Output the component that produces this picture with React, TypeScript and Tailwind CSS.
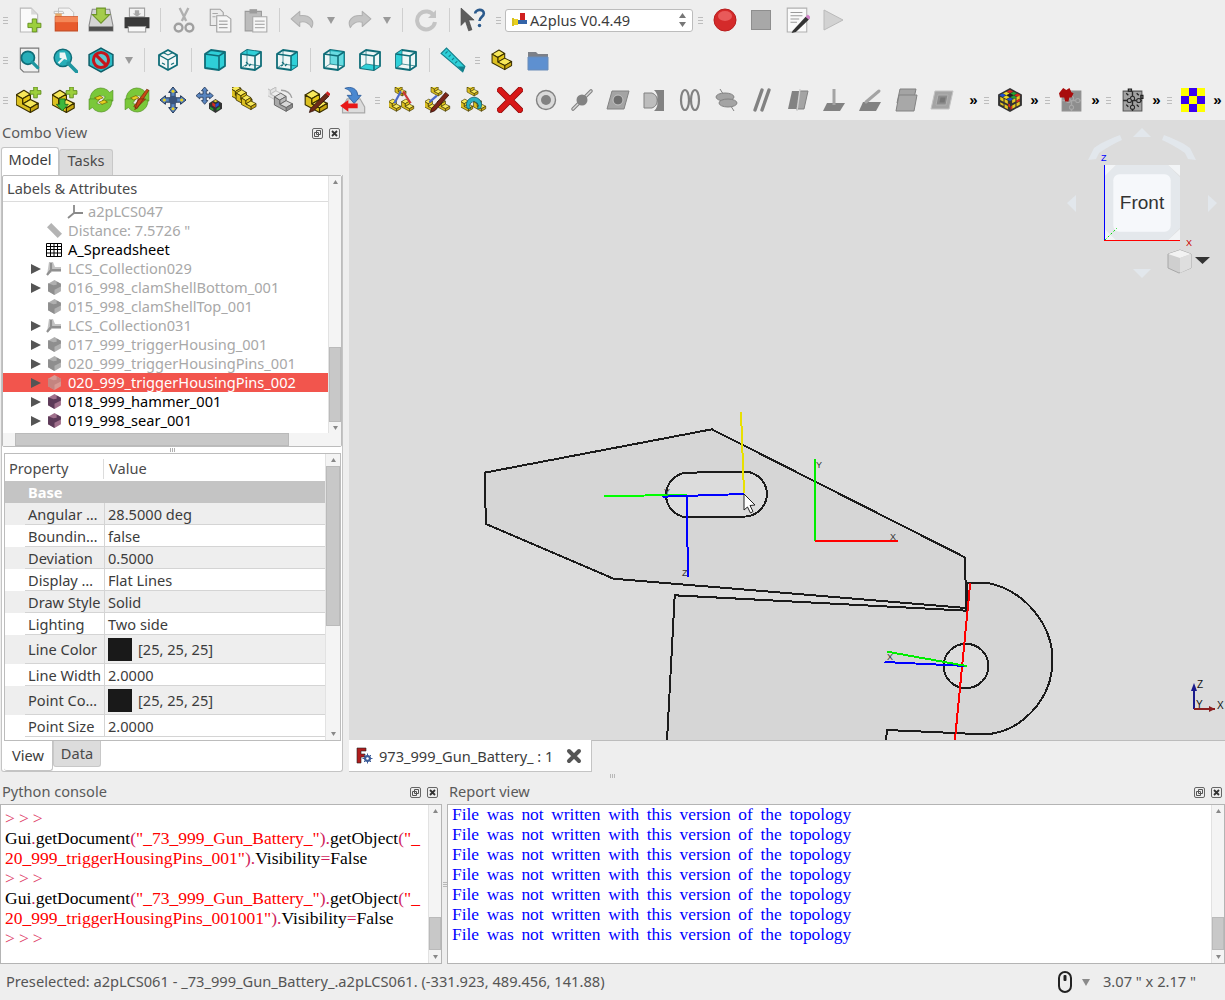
import type { ReactNode } from "react";

// --- toolbar furniture ---

function Grip({ w = "w-[11px]" }: { w?: string }) {
  return (
    <div className={`${w} h-full shrink-0 flex flex-col items-center justify-center gap-[2px]`}>
      <div className="w-[5px] h-px bg-[#bdbdbd]" />
      <div className="w-[5px] h-px bg-[#bdbdbd]" />
      <div className="w-[5px] h-px bg-[#bdbdbd]" />
    </div>
  );
}

function Sep() {
  return (
    <div className="w-[11px] h-full shrink-0 flex items-center justify-center">
      <div className="w-px h-[24px] bg-[#cfcfcf]" />
    </div>
  );
}

function Slot({ children }: { children: ReactNode }) {
  return <div className="w-9 h-full shrink-0 flex items-center justify-center">{children}</div>;
}

function DropArrow() {
  return (
    <div className="w-5 h-full shrink-0 flex items-center justify-center">
      <svg width="8" height="8" viewBox="0 0 8 8"><path d="M0 1h8L4 8z" fill="#9a9a9a" /></svg>
    </div>
  );
}

function More() {
  return (
    <div className="w-[13px] h-full shrink-0 flex items-center justify-center text-[15px] font-bold text-black font-['Liberation_Sans',sans-serif]">»</div>
  );
}

function Ic({ children, size = 24 }: { children: ReactNode; size?: number }) {
  return <svg width={size} height={size} viewBox="0 0 24 24" fill="none">{children}</svg>;
}

// --- icons ---

function Step({ t = "", c = ["#f7e85a", "#e6c818", "#c9a810", "#dcc020"], s = "#3a3000" }: { t?: string; c?: string[]; s?: string }) {
  return (
    <g transform={t}>
      <g transform="translate(-2.500 -4.500) scale(1.200)" stroke={s} strokeWidth="0.9" strokeLinejoin="round">
        <path d="M3 9L9 5.5 14 8.5 8 12Z" fill={c[0]} />
        <path d="M8 12L14 8.5V12.5L8 16Z" fill={c[1]} />
        <path d="M8 16L14 12.5 20 15.5 14 19Z" fill={c[0]} />
        <path d="M14 19L20 15.5V19L14 22.5Z" fill={c[2]} />
        <path d="M3 9L8 12V16L14 19V22.5L3 16.5Z" fill={c[3]} />
      </g>
    </g>
  );
}

const GreyStep = ["#d8d8d8", "#b8b8b8", "#8c8c8c", "#a8a8a8"];

function Plus({ x, y, s = 10 }: { x: number; y: number; s?: number }) {
  const a = s / 3;
  return (
    <path
      d={`M${x + a} ${y}h${a}v${a}h${a}v${a}h${-a}v${a}h${-a}v${-a}h${-a}v${-a}h${a}z`}
      fill="#9ccf3c"
      stroke="#5c8a18"
      strokeWidth="0.8"
    />
  );
}

function TealCube({ mode }: { mode: "front" | "top" | "right" | "rear" | "bottom" | "left" }) {
  const line = "#0f6d78";
  const fill = "#2fd0d8";
  const solid = mode === "front";
  return (
    <Ic>
      <path d="M2 6L8 2 22 4V18L16 22 2 20Z" fill={solid ? fill : "#eef6f6"} stroke={line} strokeWidth="1.8" strokeLinejoin="round" />
      {mode === "top" && <path d="M2 6L8 2 22 4 16 8Z" fill={fill} />}
      {mode === "right" && <path d="M16 8L22 4V18L16 22Z" fill={fill} />}
      {mode === "rear" && <path d="M8 2L22 4V18L8 16Z" fill={fill} opacity="0.7" />}
      {mode === "bottom" && <path d="M2 20L8 16 22 18 16 22Z" fill={fill} />}
      {mode === "left" && <path d="M2 6L8 2V16L2 20Z" fill={fill} />}
      <path d="M2 6L16 8 22 4M16 8V22" stroke={line} strokeWidth="1.6" />
      {!solid && <path d="M8 2V16L2 20M8 16L22 18" stroke={line} strokeWidth="1" opacity="0.7" />}
      {(mode === "top" || mode === "right") && <path d="M7 14l2 2M12 16l-2 2M6 18l2-1" stroke={line} strokeWidth="1.2" />}
    </Ic>
  );
}

function IsoCube() {
  const line = "#0f6d78";
  return (
    <Ic>
      <path d="M12 2L21 7V17L12 22 3 17V7Z" fill="#f2f6f6" stroke={line} strokeWidth="1.8" strokeLinejoin="round" />
      <path d="M3 7L12 12 21 7M12 12V22" stroke={line} strokeWidth="1.4" />
      <path d="M7 4.5L12 7 17 4.5M6 15l3 1.6M18 15l-3 1.6" stroke={line} strokeWidth="1.1" />
    </Ic>
  );
}

const Gry = "#a4a4a4";
const GryD = "#828282";

function Constraint({ kind }: { kind: number }) {
  return (
    <Ic>
      {kind === 0 && (
        <>
          <circle cx="12" cy="12" r="9.5" fill="#dadada" stroke={GryD} strokeWidth="1.4" />
          <circle cx="12" cy="12" r="5" fill={GryD} />
        </>
      )}
      {kind === 1 && (
        <>
          <path d="M3 21L21 3" stroke={GryD} strokeWidth="3.6" strokeLinecap="round" />
          <path d="M3 21L21 3" stroke="#dadada" strokeWidth="1.4" strokeLinecap="round" />
          <circle cx="12" cy="12" r="5.5" fill={GryD} />
        </>
      )}
      {kind === 2 && (
        <>
          <path d="M6 3H23L18 21H1Z" fill={Gry} stroke={GryD} />
          <circle cx="12" cy="12" r="5" fill="#6e6e6e" stroke="#c4c4c4" />
        </>
      )}
      {kind === 3 && (
        <>
          <path d="M2 5H10A8 8 0 0 1 10 20H2Z" fill="#bdbdbd" stroke={GryD} />
          <path d="M12 2H22V23H12A11 11 0 0 0 15 12 10 10 0 0 0 12 2Z" fill={GryD} />
        </>
      )}
      {kind === 4 && (
        <>
          <ellipse cx="7" cy="12" rx="4" ry="10" stroke={GryD} strokeWidth="2.2" fill="none" />
          <ellipse cx="17" cy="12" rx="4" ry="10" stroke={GryD} strokeWidth="2.2" fill="none" />
        </>
      )}
      {kind === 5 && (
        <>
          <path d="M6 1L20 23" stroke={GryD} />
          <ellipse cx="11" cy="9" rx="9" ry="4" fill={Gry} stroke={GryD} />
          <ellipse cx="14" cy="15" rx="9" ry="4" fill={Gry} stroke={GryD} />
        </>
      )}
      {kind === 6 && <path d="M5 22L12 2M12 22L19 2" stroke={GryD} strokeWidth="3.4" strokeLinecap="round" />}
      {kind === 7 && (
        <>
          <path d="M6 3H14L10 21H2Z" fill={GryD} />
          <path d="M14 3H22L18 21H10Z" fill={Gry} stroke={GryD} />
          <path d="M11 23L14 1" stroke="#d0d0d0" strokeWidth="1.4" />
        </>
      )}
      {kind === 8 && (
        <>
          <path d="M5 15H23L18 23H1Z" fill={GryD} />
          <path d="M12 1V17" stroke={Gry} strokeWidth="3" />
        </>
      )}
      {kind === 9 && (
        <>
          <path d="M5 14H23L18 23H1Z" fill={GryD} />
          <path d="M8 14L21 3" stroke={Gry} strokeWidth="3" strokeLinecap="round" />
        </>
      )}
      {kind === 10 && (
        <>
          <path d="M6 1H22L19 15H3Z" fill={Gry} stroke={GryD} />
          <path d="M5 7H23L20 23H2Z" fill="#a8a8a8" stroke={GryD} />
        </>
      )}
      {kind === 11 && (
        <>
          <path d="M5 3H23L19 21H1Z" fill={Gry} stroke="#c4c4c4" />
          <path d="M8 7H18L16 17H6Z" fill="#8c8c8c" stroke="#b0b0b0" />
          <path d="M10.500 9.500H15.500L14.500 14.500H9.500Z" fill="#777" />
        </>
      )}
    </Ic>
  );
}

function Rubik() {
  const cols = ["#d42a20", "#f0d820", "#2050d0", "#28a030", "#222", "#f0d820", "#d42a20", "#28a030", "#2050d0"];
  return (
    <Ic size={26}>
      <path d="M12 1L23 7V17L12 23 1 17V7Z" fill="#333" />
      {cols.map((c, i) => {
        const col = i % 3;
        const row = Math.floor(i / 3);
        return (
          <path key={i} d={`M${12 - col * 3.4 + row * 3.4} ${2.5 + col * 1.8 + row * 1.8}l3 1.6-3 1.6-3-1.6z`} fill={c} />
        );
      })}
      <path d="M3 9l3 1.6v3l-3-1.6zM7 11l3 1.6v3l-3-1.6zM3 14l3 1.6v2l-3-1.6zM14 20l3-1.6v-3l-3 1.6zM18 18l3-1.6v-3l-3 1.6zM18 12.5l3-1.6v-3l-3 1.6zM14 15l3-1.6v-3l-3 1.6zM7 16l3 1.6v3l-3-1.6z" fill="#e8c820" />
      <path d="M10.5 15l0 3 1.5 1v-3zM14 20l-1.5 1v-3l1.5-1zM18 12.5l3-1.6v2l-3 1.6z" fill="#d42a20" />
    </Ic>
  );
}

function Puzzle({ red }: { red?: boolean }) {
  const fill = red ? "#8e8e8e" : "#a2a2a2";
  const edge = red ? "#a8a8a8" : "#2a2a2a";
  return (
    <Ic size={25}>
      <path d="M3 3H21V22H3Z" fill={fill} stroke={red ? "#8e8e8e" : "#555"} />
      <path d="M12 3V8M12 12V17M12 20V22M3 12H7M11 12H16M20 12H21" stroke={edge} strokeWidth="1.300" />
      <circle cx="12" cy="10" r="2" fill={fill} stroke={edge} />
      <circle cx="9" cy="12" r="2" fill={fill} stroke={edge} />
      <circle cx="18" cy="12" r="2" fill={fill} stroke={edge} />
      <circle cx="12" cy="18.500" r="2" fill={fill} stroke={edge} />
      {red && <path d="M0 5L4 0 7 2 10 0 12 4 14 5 12 9 10 9 9 13H6L5 9 1 9Z" fill="#a80c0c" />}
      {!red && <path d="M8 1h3v2H8zM22 7v3h-2V7zM6 5l2 2M16 5l2 2M6 16l2 2M16 16l2 2" stroke="#222" strokeWidth="1.200" />}
    </Ic>
  );
}

function Checker() {
  const cells = ["#ffff00", "#3a00f0", "#ffff00", "#3a00f0", "#ffff00", "#3a00f0", "#ffff00", "#3a00f0", "#ffff00"];
  return (
    <div className="grid grid-cols-3 w-[24px] h-[24px]">
      {cells.map((c, i) => (
        <svg key={i} width="8" height="8"><rect width="8" height="8" fill={c} /></svg>
      ))}
    </div>
  );
}

function Row1() {
  return (
    <div className="h-10 flex items-center">
      <Grip />
      <Slot>
        <Ic size={26}>
          <path d="M4 1H14L20 7V23H4Z" fill="#fafafa" stroke="#b8b8b8" />
          <path d="M14 1V7H20Z" fill="#d8d8d8" />
          <Plus x={11} y={11} s={12} />
        </Ic>
      </Slot>
      <Slot>
        <Ic size={26}>
          <path d="M2 4H10L11 6H2ZM6 1H16L20 5V12H6Z" fill="#f4f4f4" stroke="#bbb" strokeWidth="0.8" />
          <path d="M3 6H9V9H3Z" fill="#e8a868" />
          <path d="M3 9H24V22H3Z" fill="#e85a2c" stroke="#c44a20" />
          <path d="M3 9H24V14H3Z" fill="#f48858" />
        </Ic>
      </Slot>
      <Slot>
        <Ic size={26}>
          <path d="M4 2H20L23 17V22H1V17Z" fill="#d4d4d4" stroke="#8c8c8c" />
          <path d="M1 18H23V22H1Z" fill="#4e4e4e" />
          <path d="M8 1H16V7H20L12 15 4 7H8Z" fill="#a4cc4c" stroke="#6c9428" />
        </Ic>
      </Slot>
      <Slot>
        <Ic size={26}>
          <path d="M5 1H19V9H5Z" fill="#f2f2f2" stroke="#a0a0a0" />
          <path d="M10 3h4v3h2l-4 3-4-3h2z" fill="#a8a8a8" />
          <path d="M1 10H23V19H1Z" fill="#3a3a3a" stroke="#333" />
          <path d="M4 18H20V23H4Z" fill="#f8f8f8" stroke="#9a9a9a" />
        </Ic>
      </Slot>
      <Sep />
      <Slot>
        <Ic size={26}>
          <path d="M8 1L14 13M16 1L10 13" stroke="#b0b0b0" strokeWidth="2.2" />
          <circle cx="7" cy="19" r="3.6" stroke="#a0a0a0" strokeWidth="2.2" />
          <circle cx="17" cy="19" r="3.6" stroke="#a0a0a0" strokeWidth="2.2" />
        </Ic>
      </Slot>
      <Slot>
        <Ic size={26}>
          <path d="M3 2H12L15 5V17H3Z" fill="#ebebeb" stroke="#a0a0a0" />
          <path d="M9 8H18L22 11V23H9Z" fill="#f6f6f6" stroke="#a0a0a0" />
          <path d="M11 13h8M11 16h8M11 19h8M5 6h5M5 9h3" stroke="#a8a8a8" />
        </Ic>
      </Slot>
      <Slot>
        <Ic size={26}>
          <path d="M2 4H17V22H2Z" fill="#bcbcbc" stroke="#9a9a9a" />
          <path d="M6 2H13V6H6Z" fill="#9c9c9c" />
          <path d="M9 9H22V23H9Z" fill="#f6f6f6" stroke="#a8a8a8" />
          <path d="M11 13h9M11 16h9M11 19h9" stroke="#b0b0b0" />
        </Ic>
      </Slot>
      <Sep />
      <Slot>
        <Ic size={26}>
          <path d="M9 4L1 11 9 18V14C13 13 17 14 20 19 23 13 19 7 9 8Z" fill="#c4c4c4" stroke="#b0b0b0" strokeLinejoin="round" />
        </Ic>
      </Slot>
      <DropArrow />
      <Slot>
        <Ic size={26}>
          <path d="M15 4L23 11 15 18V14C11 13 7 14 4 19 1 13 5 7 15 8Z" fill="#c4c4c4" stroke="#b0b0b0" strokeLinejoin="round" />
        </Ic>
      </Slot>
      <DropArrow />
      <Sep />
      <Slot>
        <Ic>
          <path d="M20 8A9 9 0 1 0 21 14" stroke="#c4c4c4" strokeWidth="4" />
          <path d="M22 2V10H14Z" fill="#c4c4c4" />
        </Ic>
      </Slot>
      <Sep />
      <Slot>
        <Ic size={26}>
          <path d="M1 1L13 12H8L11 21 8 22 5 13 1 17Z" fill="#5c5c5c" stroke="#444" strokeWidth="0.6" />
          <path d="M14 6C14 2 22 1 22 6 22 9 18 9 18 13" stroke="#2b5a8c" strokeWidth="2.4" />
          <circle cx="18" cy="17" r="1.6" fill="#2b5a8c" />
        </Ic>
      </Slot>
      <Grip w="w-[14px]" />
      <div className="w-[188px] h-[23px] shrink-0 bg-white border border-[#bcbcbc] rounded-[3px] flex items-center pl-[6px] pr-[6px]">
        <svg width="15" height="16" viewBox="0 0 15 16" fill="none" className="shrink-0">
          <path d="M0 6H2V14H0Z" fill="#d8c020" />
          <path d="M2 7H6V13H2Z" fill="#e8d020" />
          <path d="M6 8H15V12H6Z" fill="#3464a8" />
          <path d="M8 1H13V8H8Z" fill="#d02020" />
        </svg>
        <span className="ml-[3px] text-[14.6px] leading-none text-[#3c3c3c]">A2plus V0.4.49</span>
        <svg width="7" height="16" viewBox="0 0 7 16" className="ml-auto"><path d="M3.500 1L7 6H0ZM0 10H7L3.500 15Z" fill="#777" /></svg>
      </div>
      <Grip w="w-[14px]" />
      <Slot>
        <Ic>
          <circle cx="12" cy="12" r="11" fill="#d42a2a" stroke="#b81c1c" />
          <ellipse cx="12" cy="8" rx="7" ry="5" fill="#e85a5a" />
        </Ic>
      </Slot>
      <Slot>
        <svg width="20" height="20"><rect x="0.500" y="0.500" width="19" height="19" fill="#a8a8a8" stroke="#8e8e8e" /></svg>
      </Slot>
      <Slot>
        <Ic size={26}>
          <path d="M3 1H21V23H3Z" fill="#fafafa" stroke="#b0b0b0" />
          <path d="M6 5h11M6 8h11M6 11h8M6 14h6" stroke="#9a9a9a" />
          <path d="M8 22L20 9l3 2.500L11 23l-4 1z" fill="#333" />
          <path d="M20 9l2-2 3 2.500-2 2z" fill="#d080c8" />
        </Ic>
      </Slot>
      <Slot>
        <Ic>
          <path d="M3 2L22 12 3 22Z" fill="#d2d2d2" stroke="#bababa" />
        </Ic>
      </Slot>
    </div>
  );
}

function Row2() {
  return (
    <div className="h-10 flex items-center">
      <Grip />
      <Slot>
        <Ic size={26}>
          <path d="M4 1H21V23H7L4 20Z" fill="#f0f0f0" stroke="#777" />
          <circle cx="11" cy="10" r="6" fill="#27aeb8" stroke="#0f6d78" strokeWidth="1.6" />
          <path d="M15 14L20 19" stroke="#1f96a0" strokeWidth="3" strokeLinecap="round" />
        </Ic>
      </Slot>
      <Slot>
        <Ic size={26}>
          <circle cx="10" cy="10" r="8" fill="#27aeb8" stroke="#0f6d78" strokeWidth="1.4" />
          <path d="M15 15L23 23" stroke="#1f96a0" strokeWidth="3.4" strokeLinecap="round" />
          <path d="M12 5H7L14 12ZM7 5V10L14 12" fill="#eef6f6" />
          <path d="M6 15L12 9" stroke="#eef6f6" strokeWidth="2" />
        </Ic>
      </Slot>
      <Slot>
        <Ic size={26}>
          <path d="M12 1L23 7V17L12 23 1 17V7Z" fill="#29bcc6" stroke="#0f5d68" strokeWidth="1.4" />
          <circle cx="12" cy="12" r="7" stroke="#c4161c" strokeWidth="2.8" fill="#d8e8e8" fillOpacity="0.3" />
          <path d="M7 7L17 17" stroke="#c4161c" strokeWidth="2.8" />
        </Ic>
      </Slot>
      <DropArrow />
      <Sep />
      <Slot><IsoCube /></Slot>
      <Sep />
      <Slot><TealCube mode="front" /></Slot>
      <Slot><TealCube mode="top" /></Slot>
      <Slot><TealCube mode="right" /></Slot>
      <Sep />
      <Slot><TealCube mode="rear" /></Slot>
      <Slot><TealCube mode="bottom" /></Slot>
      <Slot><TealCube mode="left" /></Slot>
      <Sep />
      <Slot>
        <Ic size={26}>
          <path d="M1 6L6 1 23 18 21 23Z" fill="#2fd0d8" stroke="#15808c" />
          <path d="M23 18L21 23 16 18Z" fill="#15808c" />
          <path d="M5 6l2-2M8 9l2-2M11 12l2-2M14 15l2-2" stroke="#15808c" />
        </Ic>
      </Slot>
      <Grip w="w-[13px]" />
      <Slot><Ic size={23}><Step t="translate(0 -1)" /></Ic></Slot>
      <Slot>
        <Ic size={24}>
          <path d="M2 4H10L12 6H22V21H2Z" fill="#7c8088" />
          <path d="M2 9H22V22H2Z" fill="#5e90d0" stroke="#6a8cb8" />
        </Ic>
      </Slot>
    </div>
  );
}

function Row3() {
  return (
    <div className="h-10 flex items-center">
      <Grip />
      <Slot>
        <Ic size={26}>
          <Step t="translate(-1 1)" />
          <Plus x={13} y={0} s={10} />
        </Ic>
      </Slot>
      <Slot>
        <Ic size={26}>
          <Step t="translate(-1 1)" />
          <Plus x={13} y={0} s={10} />
          <path d="M7 11h5v5h3l-5.500 6L4 16h3z" fill="#3cb83c" stroke="#1c6c1c" strokeWidth="0.8" />
        </Ic>
      </Slot>
      <Slot>
        <Ic size={26}>
          <path d="M2 12A10 10 0 0 1 20 5L23 3V13H13L16 9A6 6 0 0 0 7 12Z" fill="#7ac83a" stroke="#4c8c1c" strokeWidth="0.6" />
          <path d="M22 12A10 10 0 0 1 4 19L1 21V11H11L8 15A6 6 0 0 0 17 12Z" fill="#7ac83a" stroke="#4c8c1c" strokeWidth="0.6" />
          <path d="M6 10l5-2 3 2-5 2zM10 14l5-2 3 2-5 2z" fill="#e8d020" stroke="#6c5c00" strokeWidth="0.6" />
        </Ic>
      </Slot>
      <Slot>
        <Ic size={26}>
          <path d="M2 12A10 10 0 0 1 20 5L23 3V13H13L16 9A6 6 0 0 0 7 12Z" fill="#7ac83a" stroke="#4c8c1c" strokeWidth="0.6" />
          <path d="M22 12A10 10 0 0 1 4 19L1 21V11H11L8 15A6 6 0 0 0 17 12Z" fill="#7ac83a" stroke="#4c8c1c" strokeWidth="0.6" />
          <path d="M6 10l5-2 3 2-5 2z" fill="#e8d020" stroke="#6c5c00" strokeWidth="0.6" />
          <path d="M9 18L21 2 23 3 12 20ZM13 11l7 0-10 10z" fill="#c84818" stroke="#702808" strokeWidth="0.6" />
        </Ic>
      </Slot>
      <Slot>
        <Ic size={26}>
          <path d="M12 0L16 5H14V10H19V8L24 12 19 16V14H14V19H16L12 24 8 19H10V14H5V16L0 12 5 8V10H10V5H8Z" fill="#5a86c0" stroke="#1c3050" strokeWidth="0.9" />
          <circle cx="12" cy="12" r="4" fill="#39547c" />
          <circle cx="12" cy="4" r="1.400" fill="#e8d020" />
          <circle cx="12" cy="20" r="1.400" fill="#e8d020" />
          <circle cx="4" cy="12" r="1.400" fill="#e8d020" />
          <circle cx="20" cy="12" r="1.400" fill="#e8d020" />
        </Ic>
      </Slot>
      <Slot>
        <Ic size={26}>
          <path d="M8 0L11 3.500H9.500V6.500H12.500V5L16 8 12.500 11V9.500H9.500V12.500H11L8 16 5 12.500H6.500V9.500H3.500V11L0 8 3.500 5V6.500H6.500V3.500H5Z" fill="#5a86c0" stroke="#1c3050" strokeWidth="0.7" />
          <path d="M18 11L24 15V20L18 24 12 20V15Z" fill="#333" />
          <path d="M15 14l3 2v3l-3-2z" fill="#d42a20" />
          <path d="M18 16l3-2v3l-3 2z" fill="#2050d0" />
          <path d="M13 18l3 2v2l-3-2zM19 20l3-2v2l-3 2z" fill="#28a030" />
          <path d="M18 12l2 1-2 1-2-1z" fill="#e8d020" />
        </Ic>
      </Slot>
      <Slot>
        <Ic size={26}>
          <g transform="translate(-2 -3) scale(.72)"><Step /></g>
          <g transform="translate(3 1) scale(.72)"><Step /></g>
          <g transform="translate(8 6) scale(.66)"><Step /></g>
        </Ic>
      </Slot>
      <Slot>
        <Ic size={26}>
          <g transform="translate(-3 -4) scale(.72)" opacity="0.6"><Step c={["#eee", "#ddd", "#ccc", "#ddd"]} s="#9a9a9a" /></g>
          <g transform="translate(5 4) scale(.82)"><Step c={GreyStep} s="#666" /></g>
          <path d="M12 3A10 8 0 0 1 22 10" stroke="#a0a0a0" strokeWidth="1.2" />
        </Ic>
      </Slot>
      <Slot>
        <Ic size={26}>
          <Step t="translate(0 1)" />
          <path d="M6 20L20 6l3 2.500L9 22l-4 1.500z" fill="#6c2a18" stroke="#2a0c04" strokeWidth="0.7" />
          <path d="M20 6l1.500-2 3 2.500-1.500 2z" fill="#d02020" />
        </Ic>
      </Slot>
      <Slot>
        <Ic size={28}>
          <path d="M3 18L7 11H18L22 18V23H3Z" fill="#dcdcdc" stroke="#a8a8a8" />
          <path d="M5 2C10 0 16 2 16 8H19L13 15 7 8H11C11 5 8 3 5 2Z" fill="#4a88d0" stroke="#2a5a98" strokeWidth="0.7" />
          <path d="M1 17L8 12V15H16V19H8V22Z" fill="#e81818" />
        </Ic>
      </Slot>
      <Grip w="w-[13px]" />
      <Slot>
        <Ic size={26}>
          <g transform="translate(5 -3) scale(.5)"><Step /></g>
          <g transform="translate(-1 10) scale(.55)"><Step /></g>
          <g transform="translate(11 10) scale(.55)"><Step /></g>
          <path d="M5 15L11 4" stroke="#4a68c8" strokeWidth="2" />
          <path d="M13 4L20 15" stroke="#c83838" strokeWidth="2" />
        </Ic>
      </Slot>
      <Slot>
        <Ic size={26}>
          <g transform="translate(5 -3) scale(.5)"><Step /></g>
          <g transform="translate(-1 10) scale(.55)"><Step /></g>
          <g transform="translate(11 10) scale(.55)"><Step /></g>
          <path d="M4 14L11 8" stroke="#4a68c8" strokeWidth="2" />
          <path d="M6 20L19 5l3 2.500L9 22l-4 1.500z" fill="#7c2418" stroke="#2a0c04" strokeWidth="0.7" />
        </Ic>
      </Slot>
      <Slot>
        <Ic size={26}>
          <g transform="translate(5 -3) scale(.5)"><Step /></g>
          <g transform="translate(-1 10) scale(.55)"><Step /></g>
          <g transform="translate(11 10) scale(.55)"><Step /></g>
          <path d="M6 20A7 7 0 1 1 18 20H15A4 4 0 1 0 9 20Z" fill="#28b0c0" stroke="#0f5d68" strokeWidth="0.7" />
        </Ic>
      </Slot>
      <Slot>
        <Ic size={26}>
          <path d="M3 3L21 21M21 3L3 21" stroke="#8c0c0c" strokeWidth="6" strokeLinecap="square" />
          <path d="M3 3L21 21M21 3L3 21" stroke="#d81818" strokeWidth="4.500" strokeLinecap="square" />
        </Ic>
      </Slot>
      {[0, 1, 2, 3, 4, 5, 6, 7, 8, 9, 10, 11].map((k) => (
        <Slot key={k}><Constraint kind={k} /></Slot>
      ))}
      <div className="w-[7px] shrink-0" />
      <More />
      <Grip w="w-[12px]" />
      <Slot><Rubik /></Slot>
      <More />
      <Grip w="w-[12px]" />
      <Slot><Puzzle red /></Slot>
      <More />
      <Grip w="w-[12px]" />
      <Slot><Puzzle /></Slot>
      <More />
      <Grip w="w-[12px]" />
      <Slot><Checker /></Slot>
      <More />
    </div>
  );
}

// --- dock bits ---

function DockButtons() {
  return (
    <div className="flex items-center gap-[6px]">
      <svg width="11" height="11" viewBox="0 0 11 11" fill="none">
        <rect x="0.500" y="0.500" width="10" height="10" rx="1.500" stroke="#666" />
        <path d="M4.500 2.500h4v4h-4zM2.500 4.500h4v4h-4z" stroke="#555" fill="#eee" />
      </svg>
      <svg width="11" height="11" viewBox="0 0 11 11" fill="none">
        <rect x="0.500" y="0.500" width="10" height="10" rx="1.500" stroke="#666" />
        <path d="M3 3L8 8M8 3L3 8" stroke="#333" strokeWidth="1.800" />
      </svg>
    </div>
  );
}

function VScroll({ thumb, w = "w-[13px]" }: { thumb: string; w?: string }) {
  return (
    <div className={`${w} shrink-0 flex flex-col bg-[#f4f4f4] border-l border-[#e2e2e2]`}>
      <div className="h-[12px] shrink-0 flex items-center justify-center">
        <svg width="5" height="4"><path d="M2.500 0L5 4H0Z" fill="#888" /></svg>
      </div>
      <div className={`${thumb} shrink-0 bg-[#c8c8c8] border border-[#bababa]`} />
      <div className="mt-auto h-[12px] shrink-0 flex items-center justify-center">
        <svg width="5" height="4"><path d="M0 0H5L2.500 4Z" fill="#888" /></svg>
      </div>
    </div>
  );
}

function Expander({ on }: { on?: boolean }) {
  return (
    <svg width="10" height="10" viewBox="0 0 10 10" className="shrink-0">
      {on && <path d="M0 0L10 5 0 10Z" fill="#555" />}
    </svg>
  );
}

function TreeBlock({ color }: { color: "grey" | "purple" | "sel" }) {
  const c = { grey: ["#b0b0b0", "#8e8e8e"], purple: ["#a0708c", "#5c3a58"], sel: ["#d89a94", "#c48480"] }[color];
  return (
    <svg width="15" height="15" viewBox="0 0 14 14">
      <path d="M7 0L13 3.500V10.500L7 14 1 10.500V3.500Z" fill={c[0]} />
      <path d="M6 5l-5-2V10.500L7 14V9L13 6V3.500L9 1.500V4.500Z" fill={c[1]} />
    </svg>
  );
}

function TreeLcs({ folder }: { folder?: boolean }) {
  return (
    <svg width="16" height="16" viewBox="0 0 16 14" fill="none">
      {folder && <path d="M3 0h4l2 5h6v5H6L1 13Z" fill="#c4c4c4" />}
      <path d="M5 1V8L1 13M5 8H15" stroke="#909090" strokeWidth="2.200" />
    </svg>
  );
}

type TreeRow = { label: string; exp?: boolean; icon: ReactNode; dark?: boolean; sel?: boolean };

const rows: TreeRow[] = [
  { label: "Distance: 7.5726 \"", icon: <svg width="15" height="15" viewBox="0 0 14 14"><path d="M0 4L4 0 14 10 10 14Z" fill="#b4b4b4" /></svg> },
  {
    label: "A_Spreadsheet",
    dark: true,
    icon: (
      <svg width="16" height="14" viewBox="0 0 16 14" fill="none">
        <path d="M.5.500h15v13H.5zM.5 3.500h15M.5 6.500h15M.5 10h15M4.500.500v13M8 .500v13M11.500.500v13" stroke="#000" />
      </svg>
    ),
  },
  { label: "LCS_Collection029", exp: true, icon: <TreeLcs folder /> },
  { label: "016_998_clamShellBottom_001", exp: true, icon: <TreeBlock color="grey" /> },
  { label: "015_998_clamShellTop_001", icon: <TreeBlock color="grey" /> },
  { label: "LCS_Collection031", exp: true, icon: <TreeLcs folder /> },
  { label: "017_999_triggerHousing_001", exp: true, icon: <TreeBlock color="grey" /> },
  { label: "020_999_triggerHousingPins_001", exp: true, icon: <TreeBlock color="grey" /> },
  { label: "020_999_triggerHousingPins_002", exp: true, sel: true, icon: <TreeBlock color="sel" /> },
  { label: "018_999_hammer_001", exp: true, dark: true, icon: <TreeBlock color="purple" /> },
  { label: "019_998_sear_001", exp: true, dark: true, icon: <TreeBlock color="purple" /> },
];

function Tree() {
  return (
    <div className="w-[340px] h-[272px] shrink-0 border border-[#bcbcbc] rounded-[2px] flex flex-col bg-white">
      <div className="h-[257px] flex">
        <div className="w-[325px] shrink-0 flex flex-col">
          <div className="h-[26px] shrink-0 pl-[4px] flex items-center border-b border-[#dcdcdc] text-[14.6px] text-[#4a4a4a]">Labels &amp; Attributes</div>
          <div className="h-[19px] shrink-0 pl-[63px] flex items-center text-[14.6px] text-[#a8a8a8]">
            <svg width="18" height="14" viewBox="0 0 18 14" fill="none" className="mr-[4px]">
              <path d="M8 0V8L2 13M8 8H17" stroke="#8a8a8a" strokeWidth="1.800" />
            </svg>
            a2pLCS047
          </div>
          {rows.map((r) => (
            <div
              key={r.label}
              className={`h-[19px] shrink-0 pl-[28px] flex items-center text-[14.6px] whitespace-nowrap ${r.sel ? "bg-[#f2554d] text-white" : r.dark ? "text-black" : "text-[#a8a8a8]"}`}
            >
              <Expander on={r.exp} />
              <div className="w-[16px] ml-[5px] shrink-0 flex items-center justify-center">{r.icon}</div>
              <span className="ml-[6px]">{r.label}</span>
            </div>
          ))}
        </div>
        <VScroll thumb="mt-[159px] h-[75px]" />
      </div>
      <div className="h-[13px] flex items-center bg-[#f4f4f4]">
        <div className="w-[12px] shrink-0" />
        <div className="w-[274px] h-full bg-[#c8c8c8] border border-[#bababa]" />
      </div>
    </div>
  );
}

type Prop = { name: string; value: string; swatch?: boolean };

const props: Prop[] = [
  { name: "Angular …", value: "28.5000 deg" },
  { name: "Boundin…", value: "false" },
  { name: "Deviation", value: "0.5000" },
  { name: "Display …", value: "Flat Lines" },
  { name: "Draw Style", value: "Solid" },
  { name: "Lighting", value: "Two side" },
  { name: "Line Color", value: "[25, 25, 25]", swatch: true },
  { name: "Line Width", value: "2.0000" },
  { name: "Point Co…", value: "[25, 25, 25]", swatch: true },
  { name: "Point Size", value: "2.0000" },
];

function PropertyTable() {
  return (
    <div className="ml-[2px] w-[337px] h-[288px] shrink-0 border border-[#bcbcbc] flex bg-white text-[14.6px] text-[#3c3c3c]">
      <div className="w-[320px] shrink-0 flex flex-col">
        <div className="h-[27px] shrink-0 pt-[2px] flex items-center text-[#4a4a4a]">
          <div className="w-[99px] pl-[4px] h-[20px] border-r border-[#dcdcdc] flex items-center">Property</div>
          <div className="pl-[5px]">Value</div>
        </div>
        <div className="h-[22px] shrink-0 pt-[2px] bg-[#c4c4c4] pl-[23px] flex items-center font-bold text-white">Base</div>
        {props.map((p, i) => (
          <div key={p.name} className={`${p.swatch ? "h-[29px]" : "h-[22px]"} shrink-0 flex ${i % 2 === 0 ? "bg-[#eeeeee]" : "bg-white"}`}>
            <div className="w-[20px] shrink-0" />
            <div className="w-[80px] shrink-0 pl-[3px] pt-[2px] border-b border-r border-[#d4d4d4] flex items-center whitespace-nowrap overflow-hidden">{p.name}</div>
            <div className="flex-1 pl-[3px] pt-[2px] border-b border-[#d4d4d4] flex items-center">
              {p.swatch && <div className="w-[24px] h-[23px] mr-[6px] -mt-[2px] bg-[#191919]" />}
              {p.value}
            </div>
          </div>
        ))}
      </div>
      <VScroll thumb="h-[160px]" w="w-[15px]" />
    </div>
  );
}

function Viewport() {
  return (
    <div className="h-[620px] bg-[#dcdcdc]">
      <svg className="block" width="876" height="620" viewBox="349 120 876 620" fill="none">
        {/* upper part */}
        <path d="M484.500 472.700L711.900 429.300 964.800 557.300 966.400 608 613.500 578.700 486 524Z" fill="#d6d6d6" stroke="#1c1c1c" strokeWidth="2" strokeLinejoin="round" shapeRendering="crispEdges" />
        <path d="M686 472.700L746 471.700A23 22.500 0 0 1 746 516.500L686 517.300A23 22.500 0 0 1 686 472.700Z" fill="#dcdcdc" stroke="#1c1c1c" strokeWidth="2" shapeRendering="crispEdges" />
        {/* lower part */}
        <path d="M667 741L674.700 595.300 966.400 610.700 967.500 582.700H986.600C1025 590 1052.500 625 1052.500 660 1052.500 700 1020 734 982.800 734.300L887 730 886 741Z" fill="#d6d6d6" />
        <path d="M667 741L674.700 595.300 966.400 610.700 967.500 582.700H986.600C1025 590 1052.500 625 1052.500 660 1052.500 700 1020 734 982.800 734.300L887 730 886 741" stroke="#1c1c1c" strokeWidth="2" shapeRendering="crispEdges" />
        <path d="M966.400 608L966.400 611" stroke="#1c1c1c" strokeWidth="2" />
        <ellipse cx="966" cy="666" rx="22.400" ry="22.200" fill="#dcdcdc" stroke="#1c1c1c" strokeWidth="2" shapeRendering="crispEdges" />
        {/* axes */}
        <g shapeRendering="crispEdges" strokeWidth="2">
          <path d="M741 412L744 493" stroke="#e8e000" />
          <path d="M604 496L687 495" stroke="#00ff00" />
          <path d="M662.500 496.700L744 494M687 495L687.800 576.700" stroke="#0000ff" />
          <path d="M814.800 459.300V540.700" stroke="#00ee00" />
          <path d="M814.800 540.700H897.900" stroke="#ff0000" />
          <path d="M970.200 583.300L954.900 740" stroke="#ff0000" />
          <path d="M884.500 662L966.700 666" stroke="#0000ff" />
          <path d="M887.100 651.700L966.700 666" stroke="#00ee00" />
        </g>
        <g className="font-['Liberation_Sans',sans-serif]" fontSize="9" fill="#333">
          <text x="816" y="468">Y</text>
          <text x="890" y="540">X</text>
          <text x="682" y="576">Z</text>
          <text x="887" y="660">X</text>
          <text x="664" y="495">Y</text>
        </g>
        {/* cursor */}
        <path d="M744 494V510L747.500 507 750.500 513 753 511.500 750 505.500 755 505Z" fill="#fff" stroke="#222" strokeWidth="1" />
        {/* navigation cube */}
        <path d="M1116 165H1168L1180 177V228L1168 240H1116L1104 228V177Z" fill="#e4e8ec" />
        <rect x="1113.300" y="174.300" width="57.400" height="57.400" rx="6" fill="#f6f8fb" />
        <path d="M1105 176L1116 165 1105 165ZM1180 176L1168 165H1180ZM1105 229L1116 240H1105ZM1180 229L1168 240H1180Z" fill="#f2f4f6" />
        <text x="1142" y="209" textAnchor="middle" fontSize="19" fill="#333" className="font-['Liberation_Sans',sans-serif]">Front</text>
        <path d="M1104.500 165V240" stroke="#0000ff" />
        <path d="M1104 240.500H1180" stroke="#ff0000" />
        <path d="M1105 240L1117 228" stroke="#00dd00" strokeDasharray="2 2" />
        <g className="font-['Liberation_Sans',sans-serif]" fontSize="9">
          <text x="1101" y="161" fill="#0000ff">Z</text>
          <text x="1186" y="246" fill="#cc0000">X</text>
        </g>
        <g fill="#e2e7ec">
          <path d="M1142 128L1151 137H1133Z" />
          <path d="M1067 203L1076 195V212Z" />
          <path d="M1217 203L1208 195V212Z" />
          <path d="M1142 278L1133 269H1151Z" />
          <path d="M1088 160L1094 148C1102 142 1112 138 1120 135L1122 140C1113 144 1106 148 1099 153L1096 159Z" />
          <path d="M1196 160L1190 148C1182 142 1172 138 1164 135L1162 140C1171 144 1178 148 1185 153L1188 159Z" />
        </g>
        <path d="M1168 254L1180 250 1191 254V268L1179 273 1168 268Z" fill="#cfcfcf" stroke="#a8a8a8" />
        <path d="M1168 254L1180 258 1191 254 1180 250Z" fill="#f2f2f2" />
        <path d="M1180 258V273L1191 268V254Z" fill="#dedede" />
        <path d="M1195 257H1210L1202.500 264Z" fill="#333" />
        {/* corner axes */}
        <path d="M1194 709V688" stroke="#1a1a8c" strokeWidth="2" />
        <path d="M1194 683L1197 691H1191Z" fill="#1a1a8c" />
        <path d="M1194 709H1215" stroke="#8a2020" strokeWidth="2" />
        <path d="M1215 709L1209 706V712Z" fill="#8a2020" />
        <g className="font-['Liberation_Sans',sans-serif]" fontSize="10" fill="#111">
          <text x="1197" y="688">Z</text>
          <text x="1196" y="708">Y</text>
          <text x="1217" y="709">X</text>
        </g>
      </svg>
    </div>
  );
}

const OP = "text-[#d01c5c]";

function Prompt() {
  return <div className="text-[#e0436a] tracking-[4px]">&gt;&gt;&gt;</div>;
}

function CallLine({ tail, rest }: { tail: string; rest: string }) {
  return (
    <>
      <div className="whitespace-nowrap">
        Gui<span className={OP}>.</span>getDocument<span className={OP}>(</span>
        <span className="text-[#ff0000]">"_73_999_Gun_Battery_"</span>
        <span className={OP}>).</span>getObject<span className={OP}>(</span>
        <span className="text-[#ff0000]">"_</span>
      </div>
      <div className="whitespace-nowrap">
        <span className="text-[#ff0000]">{tail}"</span>
        <span className={OP}>).</span>Visibility<span className={OP}>=</span>{rest}
      </div>
    </>
  );
}

export default function App() {
  return (
    <div className="w-[1225px] h-[1000px] overflow-hidden flex flex-col bg-[#eeeeee] font-['Noto_Sans',sans-serif]">
      <Row1 />
      <Row2 />
      <Row3 />

      <div className="h-[652px] shrink-0 flex">
        {/* combo view */}
        <div className="w-[349px] shrink-0 flex flex-col">
          <div className="h-[26px] shrink-0 pl-[2px] pr-[9px] flex items-center justify-between text-[14.6px] text-[#5a5a5a]">
            Combo View
            <DockButtons />
          </div>
          <div className="h-[29px] shrink-0 pl-px flex items-end">
            <div className="w-[58px] h-[28px] pb-[3px] bg-white border border-b-0 border-[#c4c4c4] rounded-t-[3px] flex items-center justify-center text-[14.6px] text-[#3c3c3c]">Model</div>
            <div className="w-[54px] h-[26px] pb-[3px] bg-[#dcdcdc] border border-b-0 border-[#c8c8c8] rounded-t-[3px] flex items-center justify-center text-[14.6px] text-[#4a4a4a]">Tasks</div>
          </div>
          <div className="ml-px w-[342px] h-[597px] bg-white border border-[#c4c4c4] border-t-0 rounded-b-[3px] flex flex-col">
            <Tree />
            <div className="h-[6px] shrink-0 flex items-center justify-center gap-[1px]">
              <div className="w-px h-[4px] bg-[#b0b0b0]" />
              <div className="w-px h-[4px] bg-[#b0b0b0]" />
              <div className="w-px h-[4px] bg-[#b0b0b0]" />
            </div>
            <PropertyTable />
            <div className="flex items-start text-[14.6px]">
              <div className="ml-[2px] w-[49px] h-[30px] bg-white border-r border-b border-[#c4c4c4] rounded-b-[3px] flex items-center justify-center text-[#3c3c3c]">View</div>
              <div className="w-[48px] h-[26px] bg-[#dcdcdc] border border-t-0 border-[#c8c8c8] rounded-b-[3px] flex items-center justify-center text-[#4a4a4a]">Data</div>
            </div>
          </div>
        </div>

        {/* 3d view */}
        <div className="flex-1 flex flex-col">
          <Viewport />
          <div className="h-[32px] border-t border-[#bcbcbc] flex">
            <div className="w-[243px] h-[32px] -mt-px bg-white border-r border-b border-[#c4c4c4] flex items-center pl-[7px] text-[14.6px] text-[#3c3c3c]">
              <svg width="17" height="17" viewBox="0 0 17 17">
                <path d="M1 1H10V4H5V7H9V10H5V16H1Z" fill="#b01c1c" stroke="#222" strokeWidth="0.6" />
                <circle cx="11.500" cy="11.500" r="3.500" fill="#3c5c98" />
                <path d="M11.500 6.500v10M6.500 11.500h10M8 8l7 7M15 8l-7 7" stroke="#3c5c98" />
                <circle cx="11.500" cy="11.500" r="1.300" fill="#fff" />
              </svg>
              <span className="ml-[6px] pt-[2px]">973_999_Gun_Battery_ : 1</span>
              <svg width="16" height="16" viewBox="0 0 16 16" className="ml-[13px]">
                <path d="M3 3L13 13M13 3L3 13" stroke="#555555" strokeWidth="4" strokeLinecap="round" />
              </svg>
            </div>
          </div>
        </div>
      </div>

      {/* bottom docks */}
      <div className="h-[11px] shrink-0 flex items-center justify-center gap-[1px] pb-[4px]">
        <div className="w-px h-[4px] bg-[#b8b8b8]" />
        <div className="w-px h-[4px] bg-[#b8b8b8]" />
        <div className="w-px h-[4px] bg-[#b8b8b8]" />
      </div>
      <div className="h-[181px] shrink-0 flex">
        <div className="w-[442px] shrink-0 flex flex-col">
          <div className="h-[21px] shrink-0 pb-[3px] pl-[2px] pr-[4px] flex items-center justify-between text-[14.6px] text-[#5a5a5a]">
            Python console
            <DockButtons />
          </div>
          <div className="h-[160px] border border-[#b4b4b4] bg-white flex">
            <div className="flex-1 pl-[4px] pt-[3px] text-[17.55px] leading-[20px] text-black font-['Liberation_Serif',serif]">
              <Prompt />
              <CallLine tail="20_999_triggerHousingPins_001" rest="False" />
              <Prompt />
              <CallLine tail="20_999_triggerHousingPins_001001" rest="False" />
              <Prompt />
            </div>
            <VScroll thumb="mt-[100px] h-[33px]" />
          </div>
        </div>
        <div className="w-[5px] shrink-0 flex flex-col items-center justify-center gap-[1px] pt-[22px]">
          <div className="w-[4px] h-px bg-[#b8b8b8]" />
          <div className="w-[4px] h-px bg-[#b8b8b8]" />
          <div className="w-[4px] h-px bg-[#b8b8b8]" />
        </div>
        <div className="flex-1 flex flex-col">
          <div className="h-[21px] shrink-0 pb-[3px] pl-[2px] pr-[3px] flex items-center justify-between text-[14.6px] text-[#5a5a5a]">
            Report view
            <DockButtons />
          </div>
          <div className="h-[160px] border border-[#b4b4b4] bg-white flex">
            <div className="flex-1 pl-[4px] -mt-px text-[17.4px] leading-[20px] text-[#0000ff] [word-spacing:3.300px] font-['Liberation_Serif',serif]">
              {[0, 1, 2, 3, 4, 5, 6].map((i) => (
                <div key={i}>File was not written with this version of the topology</div>
              ))}
            </div>
            <VScroll thumb="mt-[100px] h-[33px]" />
          </div>
        </div>
      </div>

      {/* status bar */}
      <div className="h-[36px] shrink-0 pl-[6px] pr-[29px] flex items-center text-[14.65px] text-[#555555]">
        Preselected: a2pLCS061 - _73_999_Gun_Battery_.a2pLCS061. (-331.923, 489.456, 141.88)
        <svg width="14" height="22" viewBox="0 0 14 22" fill="none" className="ml-auto">
          <rect x="1" y="1" width="12" height="20" rx="6" stroke="#222" strokeWidth="2" />
          <rect x="5.500" y="4" width="3" height="6" rx="1" fill="#222" />
        </svg>
        <svg width="8" height="8" viewBox="0 0 8 8" className="ml-[10px]"><path d="M0 1h8L4 8z" fill="#8a8a8a" /></svg>
        <span className="ml-[13px]">3.07 " x 2.17 "</span>
      </div>
    </div>
  );
}
